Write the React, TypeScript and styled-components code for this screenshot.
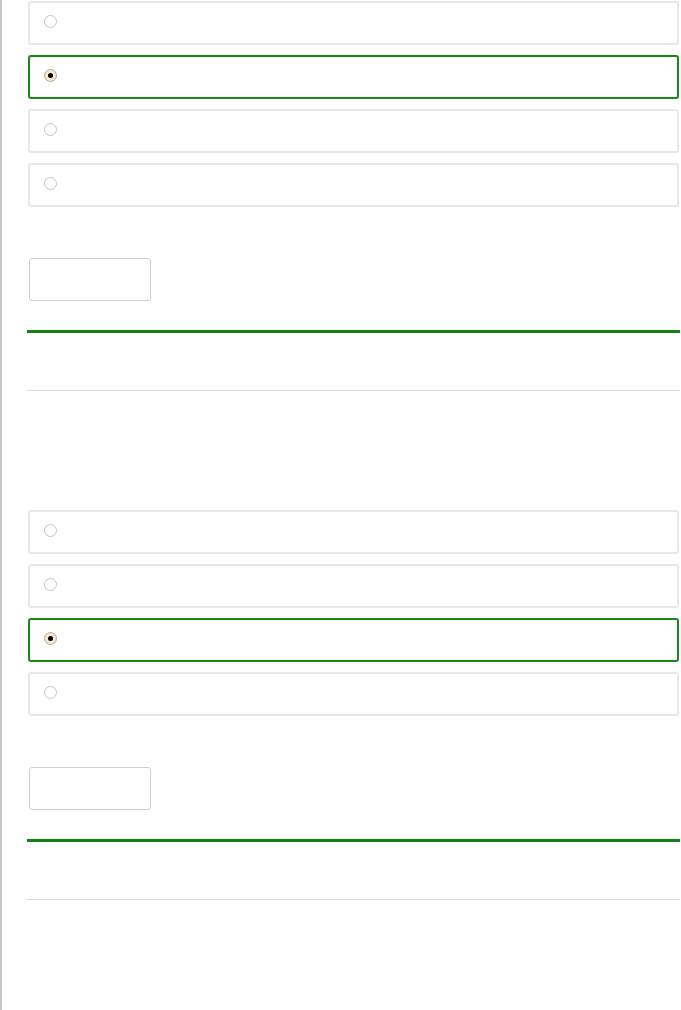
import styled, { createGlobalStyle } from 'styled-components';

const GlobalStyle = createGlobalStyle`
  html, body {
    margin: 0;
    padding: 0;
    background: #fff;
    font-family: "Liberation Sans", Arial, sans-serif;
  }
`;

const Page = styled.main`
  min-height: 1010px;
  border-left: 2px solid #c8c8c8;
  padding: 1px 1px 0 25px;
  box-sizing: border-box;
  display: flex;
  flex-direction: column;
`;

const Question = styled.section`
  display: flex;
  flex-direction: column;
  padding-bottom: 119px;
`;

const Options = styled.div`
  display: flex;
  flex-direction: column;
  gap: 10px;
  padding: 0 1px 0 1px;
`;

const Option = styled.label<{ $selected?: boolean }>`
  height: 44px;
  box-sizing: border-box;
  border: 2px solid ${({ $selected }) => ($selected ? '#1b871b' : '#e8e8e8')};
  border-radius: 3px;
  display: flex;
  align-items: flex-start;
  padding: 12px 0 0 14px;
`;

const Radio = styled.span<{ $checked?: boolean }>`
  width: 13px;
  height: 13px;
  box-sizing: border-box;
  border-radius: 50%;
  border: 1px solid ${({ $checked }) => ($checked ? '#b9a88a' : '#c4c4c4')};
  background: ${({ $checked }) => ($checked ? '#f3e8d2' : '#fff')};
  display: flex;
  align-items: center;
  justify-content: center;

  &::after {
    content: '';
    width: 5px;
    height: 5px;
    border-radius: 50%;
    background: #000;
    display: ${({ $checked }) => ($checked ? 'block' : 'none')};
  }
`;

const SubmitButton = styled.button`
  margin: 51px 0 0 2px;
  width: 122px;
  height: 43px;
  border: 1px solid #cfcfcf;
  border-radius: 3px;
  background: #fff;
`;

const Divider = styled.hr<{ $strong?: boolean }>`
  margin: ${({ $strong }) => ($strong ? '29px 0 0' : '57px 0 0')};
  border: none;
  height: ${({ $strong }) => ($strong ? '3px' : '1px')};
  background: ${({ $strong }) => ($strong ? '#118211' : '#dcdcdc')};
`;

const questions = [2, 3];

const App = () => {
  return (
    <>
      <GlobalStyle />
      <Page>
        {questions.map((selected, q) => (
          <Question key={q}>
            <Options>
              {[1, 2, 3, 4].map((n) => (
                <Option key={n} $selected={n === selected}>
                  <Radio $checked={n === selected} />
                </Option>
              ))}
            </Options>
            <SubmitButton type="button" />
            <Divider $strong />
            <Divider />
          </Question>
        ))}
      </Page>
    </>
  );
};

export default App;
